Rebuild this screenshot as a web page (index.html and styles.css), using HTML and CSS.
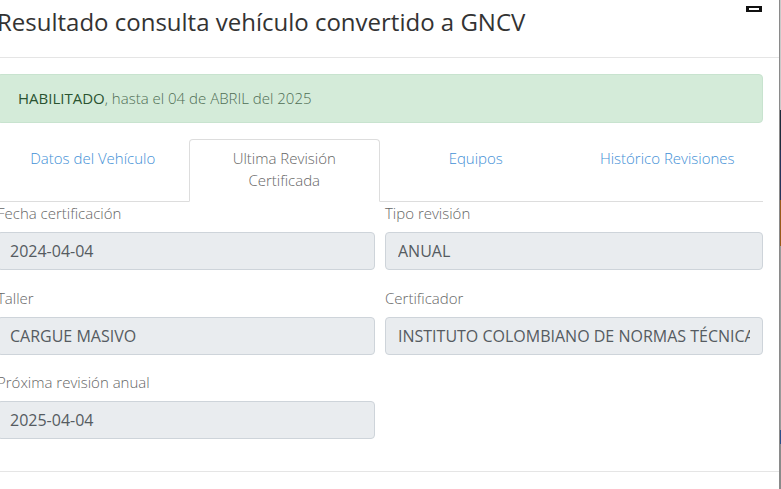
FILE: index.html
```html
<!DOCTYPE html>
<html lang="es">
<head>
<meta charset="utf-8">
<title>Resultado consulta vehículo convertido a GNCV</title>
<link rel="stylesheet" href="styles.css">
</head>
<body>
<div class="page">
  <div class="modal">
    <div class="modal-header">
      <h4 class="modal-title">Resultado consulta vehículo convertido a GNCV</h4>
      <button class="close" type="button" aria-label="Cerrar"></button>
    </div>
    <div class="modal-body">
      <div class="alert"><strong>HABILITADO</strong>, hasta el 04 de ABRIL del 2025</div>
      <ul class="tabs">
        <li class="tab"><a>Datos del Vehículo</a></li>
        <li class="tab active"><a>Ultima Revisión<br>Certificada</a></li>
        <li class="tab"><a>Equipos</a></li>
        <li class="tab"><a>Histórico Revisiones</a></li>
      </ul>
      <div class="form-grid">
        <div class="group">
          <label class="lbl">Fecha certificación</label>
          <input class="field" readonly value="2024-04-04">
        </div>
        <div class="group">
          <label class="lbl">Tipo revisión</label>
          <input class="field" readonly value="ANUAL">
        </div>
        <div class="group">
          <label class="lbl">Taller</label>
          <input class="field" readonly value="CARGUE MASIVO">
        </div>
        <div class="group">
          <label class="lbl">Certificador</label>
          <input class="field" readonly value="INSTITUTO COLOMBIANO DE NORMAS TÉCNICAS Y CERTIFICACIÓN">
        </div>
        <div class="group">
          <label class="lbl">Próxima revisión anual</label>
          <input class="field" readonly value="2025-04-04">
        </div>
      </div>
    </div>
    <div class="modal-footer"></div>
  </div>
  <div class="backdrop-strip"></div>
</div>
</body>
</html>
```

FILE: styles.css
```css
* { box-sizing: border-box; }
html, body { margin: 0; padding: 0; }
body {
  font-family: "Open Sans", "Liberation Sans", sans-serif;
  font-size: 15px;
  color: #333;
  background: #fff;
  overflow: hidden;
}
.page {
  display: flex;
  width: 781px;
  height: 489px;
  overflow: hidden;
}
.modal {
  flex: none;
  width: 799px;
  margin-left: -19px;
  background: #fff;
  border-right: 1px solid #8a8a8a;
  height: 489px;
}
.backdrop-strip {
  flex: none;
  width: 1px;
  height: 489px;
  background: linear-gradient(to bottom,
    #c9c9c9 0, #c9c9c9 110px,
    #1d2b3b 110px, #1d2b3b 150px,
    #26345a 150px, #26345a 200px,
    #9a5a1a 200px, #9a5a1a 246px,
    #9a9a9a 246px, #9a9a9a 430px,
    #2c4f8a 430px, #2c4f8a 444px,
    #8a8a8a 444px);
}
.modal-header {
  display: flex;
  justify-content: space-between;
  align-items: flex-start;
  padding: 5px 16px 0 16px;
  height: 58px;
  border-bottom: 1px solid #e5e5e5;
}
.modal-title {
  margin: 0;
  font-size: 24px;
  font-weight: 400;
  line-height: 34px;
  color: #333;
}
.close {
  width: 16px;
  height: 6px;
  margin: 1px 1px 0 0;
  padding: 0;
  border: 2px solid #111;
  border-left-width: 3px;
  border-right-width: 3px;
  background: #fff;
}
.modal-body {
  padding: 16px 16px 15px 16px;
}
.alert {
  background: #d4ebd9;
  border: 1px solid #c8e3cf;
  border-radius: 4px;
  padding: 12px 20px 13px 20px;
  line-height: 22px;
  font-weight: 300;
  color: #4f6e55;
  margin-bottom: 16px;
}
.alert strong {
  font-weight: 400;
  color: #2a5331;
}
.tabs {
  list-style: none;
  margin: 0;
  padding: 0;
  display: grid;
  grid-template-columns: repeat(4, 1fr);
  border-bottom: 1px solid #ddd;
}
.tab {
  margin-bottom: -1px;
  border: 1px solid transparent;
  border-radius: 4px 4px 0 0;
  padding: 7px 6px 10px;
  text-align: center;
  line-height: 22px;
  height: 63px;
}
.tab a {
  color: #4390d6;
  font-weight: 300;
}
.tab.active {
  border-color: #ddd;
  border-bottom-color: #fff;
  background: #fff;
}
.tab.active a {
  color: #666;
}
.form-grid {
  display: grid;
  grid-template-columns: 1fr 1fr;
  column-gap: 10px;
}
.group {
  display: flex;
  flex-direction: column;
  margin-bottom: 17px;
}
.lbl {
  font-weight: 300;
  color: #666;
  line-height: 22px;
  margin-bottom: 8px;
}
.field {
  height: 38px;
  width: 100%;
  padding: 0 12px;
  font-family: "Open Sans", "Liberation Sans", sans-serif;
  font-size: 16px;
  font-weight: 400;
  color: #555b61;
  background: #e9ecef;
  border: 1px solid #ced4da;
  border-radius: 4px;
  outline: none;
}
.group:nth-child(5) {
  margin-top: -1px;
}
.modal-footer {
  border-top: 1px solid #e5e5e5;
}
```
